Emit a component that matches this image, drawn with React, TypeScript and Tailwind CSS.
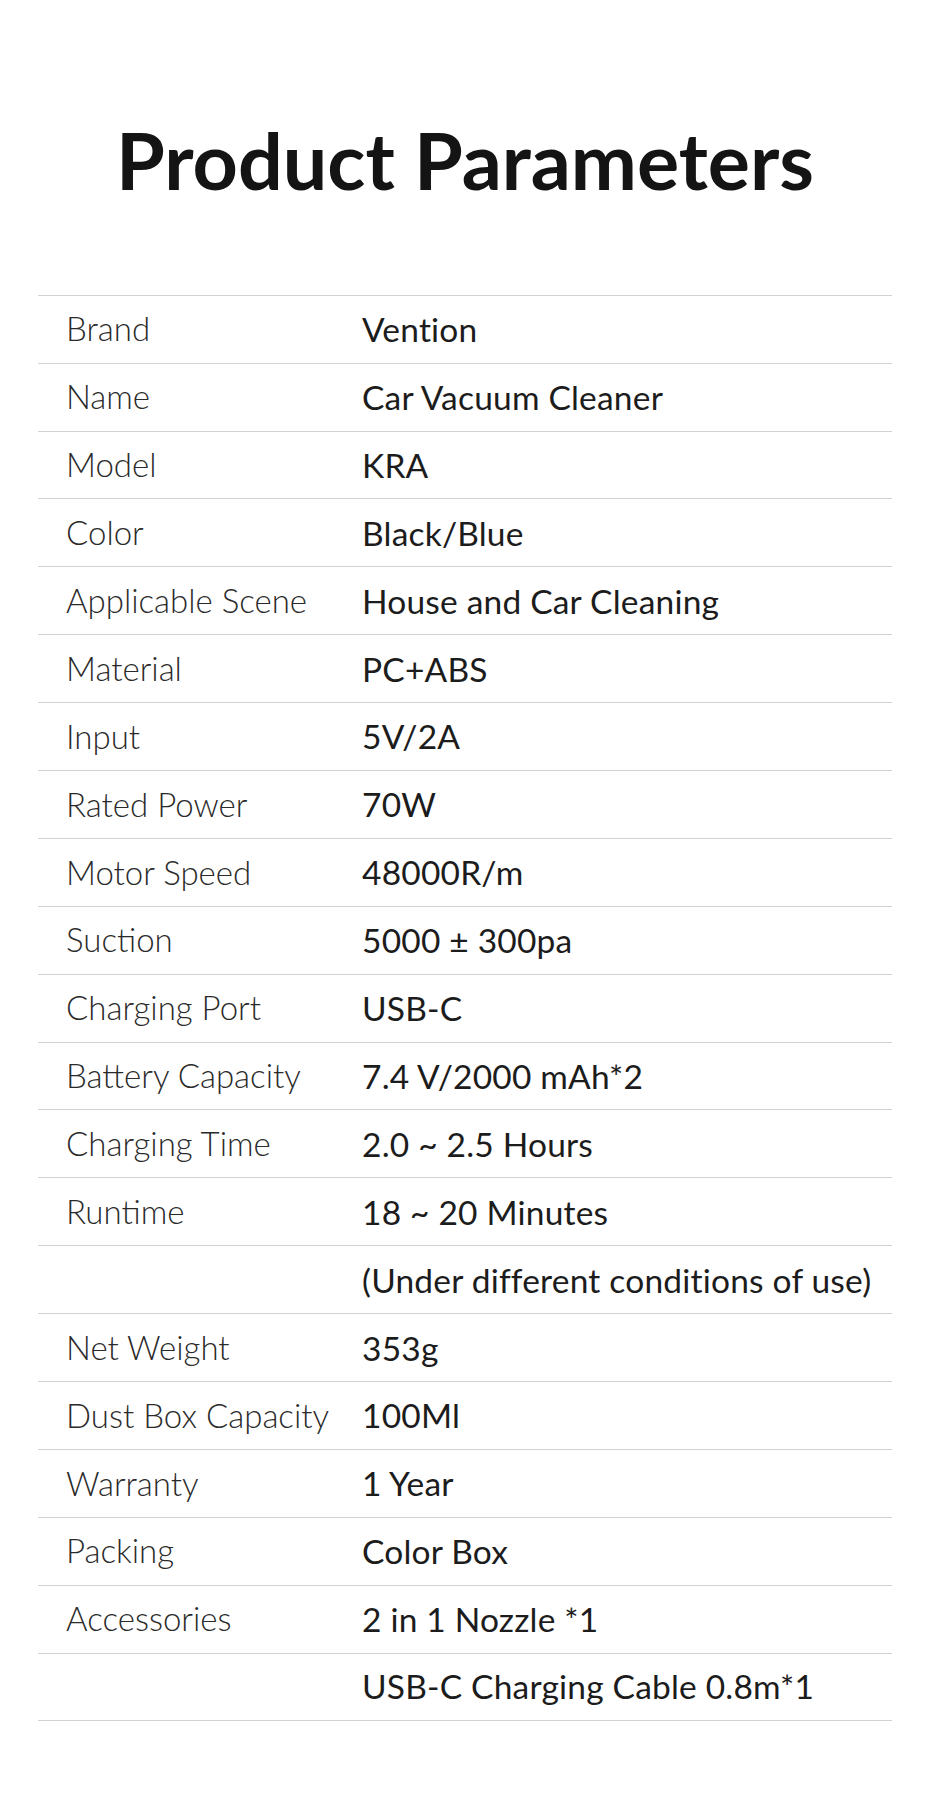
const rows: [string, string][] = [
  ['Brand', 'Vention'],
  ['Name', 'Car Vacuum Cleaner'],
  ['Model', 'KRA'],
  ['Color', 'Black/Blue'],
  ['Applicable Scene', 'House and Car Cleaning'],
  ['Material', 'PC+ABS'],
  ['Input', '5V/2A'],
  ['Rated Power', '70W'],
  ['Motor Speed', '48000R/m'],
  ['Suction', '5000 ± 300pa'],
  ['Charging Port', 'USB-C'],
  ['Battery Capacity', '7.4 V/2000 mAh*2'],
  ['Charging Time', '2.0 ~ 2.5 Hours'],
  ['Runtime', '18 ~ 20 Minutes'],
  ['', '(Under different conditions of use)'],
  ['Net Weight', '353g'],
  ['Dust Box Capacity', '100Ml'],
  ['Warranty', '1 Year'],
  ['Packing', 'Color Box'],
  ['Accessories', '2 in 1 Nozzle *1'],
  ['', 'USB-C Charging Cable 0.8m*1'],
];

export default function App() {
  return (
    <div className="w-[930px] h-[1798px] bg-white font-['Lato',sans-serif]">
      <h1 className="pt-[113px] text-center text-[79px] leading-[1.2] font-bold text-[#141414]">
        Product Parameters
      </h1>

      <div className="mx-[38px] mt-[87px]">
        {rows.map(([label, value], i) => (
          <div
            key={i}
            className={
              'grid grid-cols-[324px_1fr] items-center h-[67.9px] border-t border-[#d2d2d2]' +
              (i === rows.length - 1 ? ' border-b' : '')
            }
          >
            <div className="pl-[28px] text-[33px] font-light text-[#2a2a2a] leading-[1.2]">{label}</div>
            <div className="text-[33.5px] font-normal text-[#1c1c1c] leading-[1.2] tracking-[0.2px]">{value}</div>
          </div>
        ))}
      </div>
    </div>
  );
}
